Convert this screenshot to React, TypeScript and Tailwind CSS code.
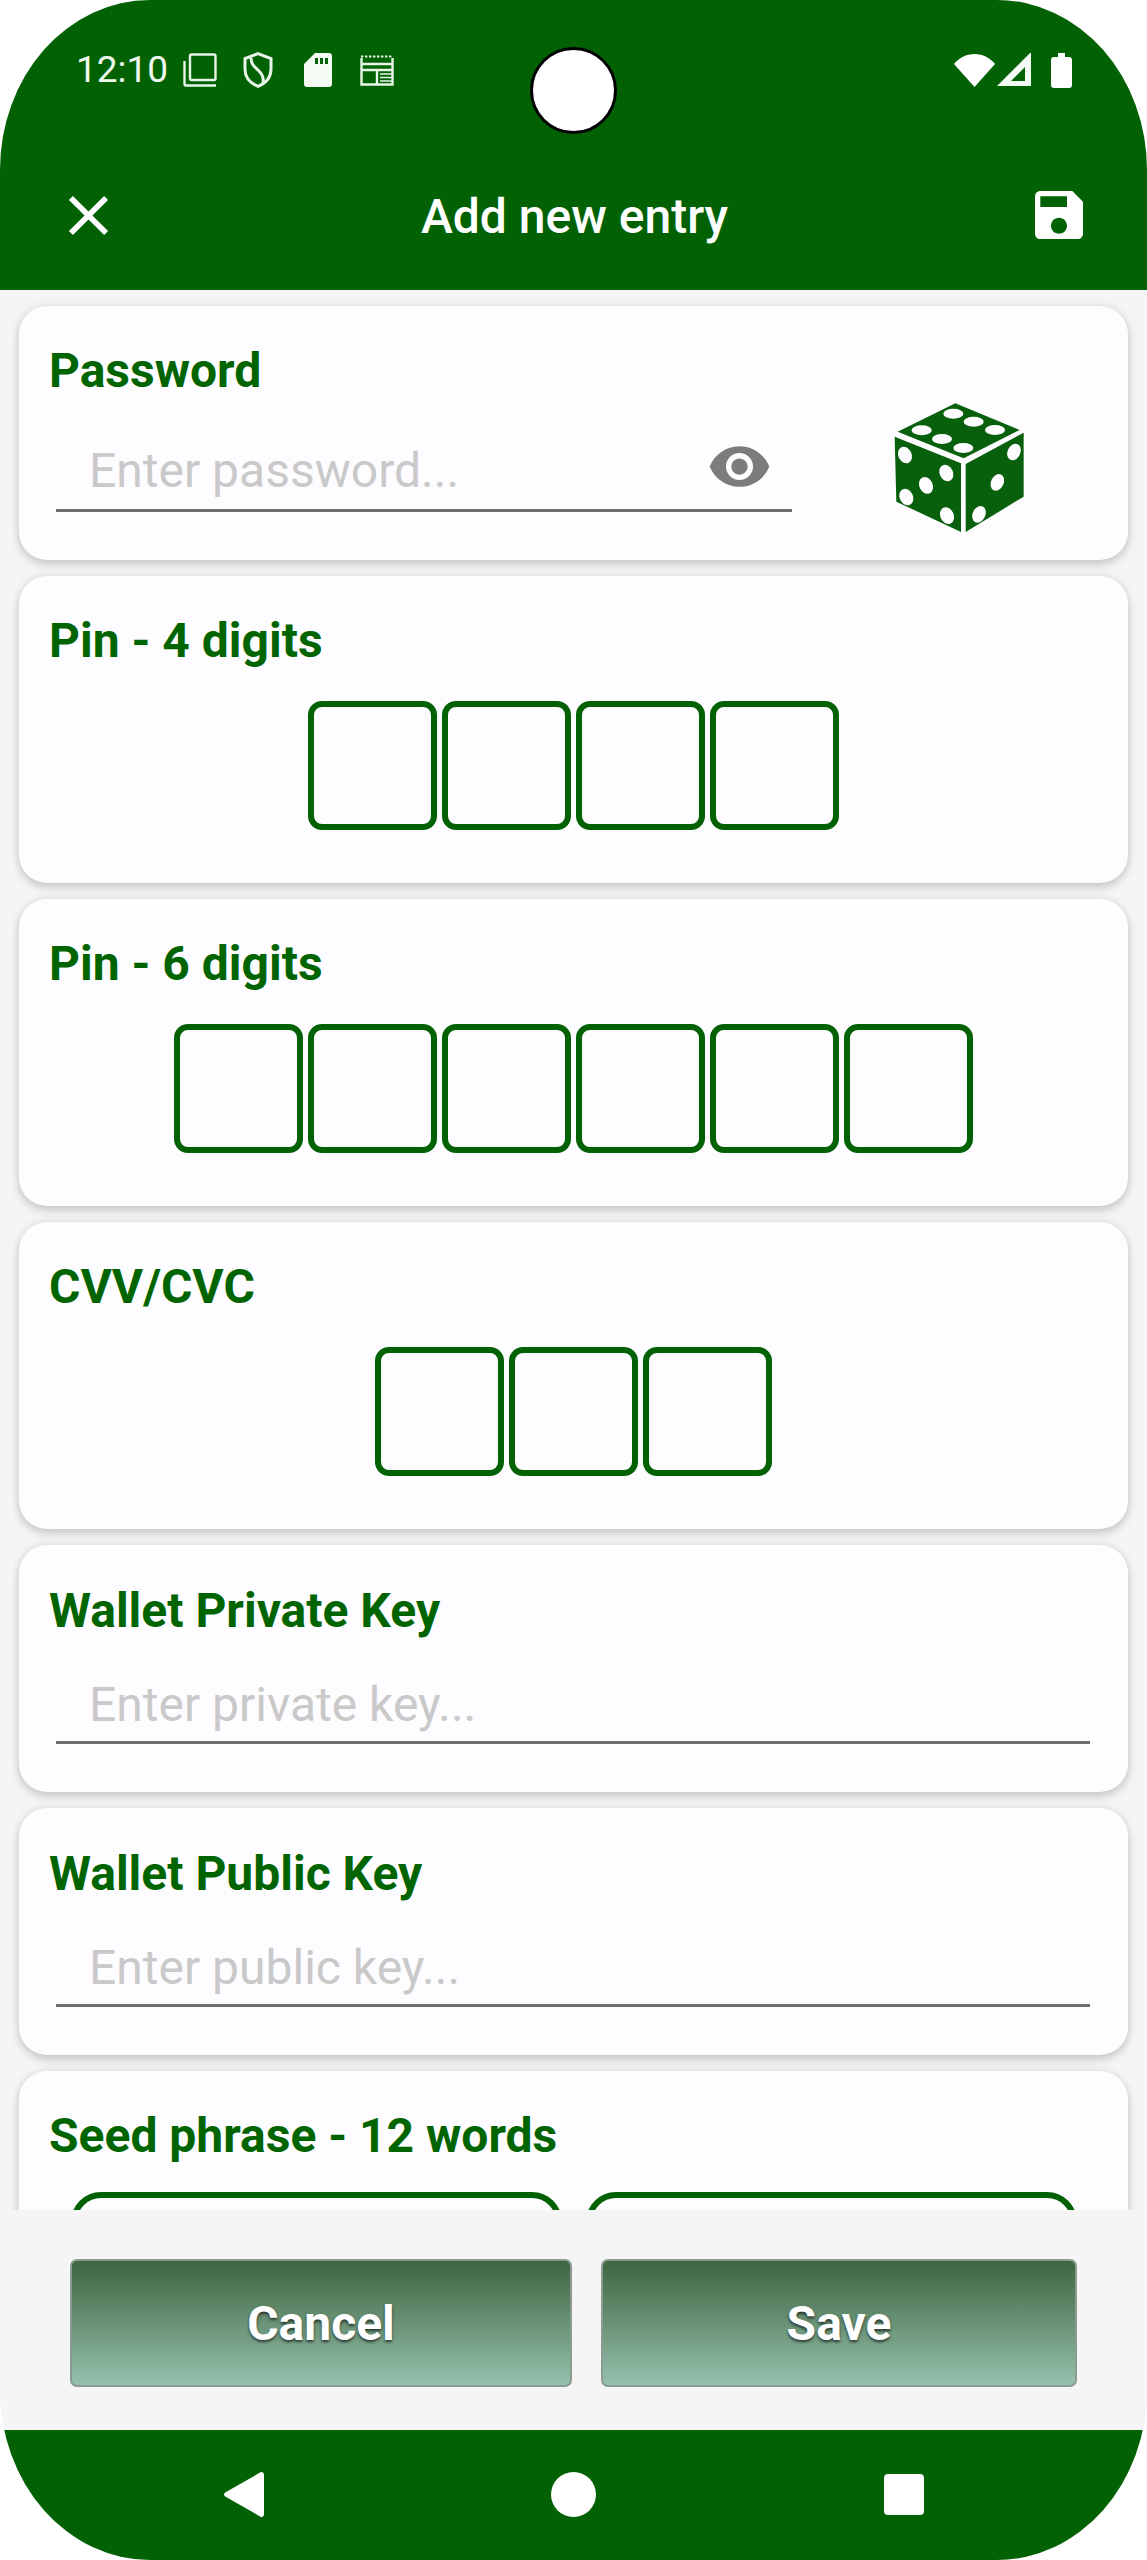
const GREEN = "#016103";

function CopyIcon() {
  return (
    <svg viewBox="0 0 34 34" className="w-[34px] h-[34px]" fill="none" stroke="#e8f5e8" strokeWidth="2.4">
      <rect x="7" y="1.5" width="25.5" height="25.5" rx="1.5" />
      <path d="M1.5 8v23a1.5 1.5 0 0 0 1.5 1.5h30" />
    </svg>
  );
}

function ShieldIcon() {
  return (
    <svg viewBox="0 0 30 36" className="w-[30px] h-[36px] ml-[26px]" fill="none" stroke="#e8f5e8" strokeWidth="3">
      <path d="M15 1.6 28 6.6v10.6c0 8-5.4 14-13 17.2C7.4 31.2 2 25.2 2 17.2V6.6z" />
      <path d="M8 6c0 7 4 9 8 13s5 7 4 12" />
    </svg>
  );
}

function SdIcon() {
  return (
    <svg viewBox="0 0 28 34" className="w-[28px] h-[34px] ml-[31px]">
      <path
        fillRule="evenodd"
        fill="#f4fbf4"
        d="M11 0h14a3 3 0 0 1 3 3v28a3 3 0 0 1-3 3H3a3 3 0 0 1-3-3V11zM11 5v6h3V5zM16 5v6h3V5zM21 5v6h3V5z"
      />
    </svg>
  );
}

function NewsIcon() {
  return (
    <svg viewBox="0 0 34 31" className="w-[34px] h-[31px] ml-[28px]" fill="none" stroke="#e8f5e8">
      <path strokeWidth="2.4" d="M1.5 3v26.5h31V3" />
      <path strokeWidth="2" strokeDasharray="2.4 1.6" d="M1 1.5h32" />
      <path strokeWidth="2.4" d="M1.5 9h31M1.5 15h31M17 15v14.5" />
      <path strokeWidth="1.6" d="M20 19h13M20 22.5h13M20 26h13" />
    </svg>
  );
}

function CloseIcon() {
  return (
    <svg viewBox="0 0 24 24" className="w-[67px] h-[67px]" fill="#ffffff">
      <path d="M19 6.41 17.59 5 12 10.59 6.41 5 5 6.41 10.59 12 5 17.59 6.41 19 12 13.41 17.59 19 19 17.59 13.41 12z" />
    </svg>
  );
}

function SaveIcon() {
  return (
    <svg viewBox="0 0 24 24" className="w-[64px] h-[64px]" fill="#ffffff">
      <path d="M17 3H5c-1.11 0-2 .9-2 2v14c0 1.1.89 2 2 2h14c1.1 0 2-.9 2-2V7l-4-4zm-5 16c-1.66 0-3-1.34-3-3s1.34-3 3-3 3 1.34 3 3-1.34 3-3 3zm3-10H5V5h10v4z" />
    </svg>
  );
}

function EyeIcon() {
  return (
    <svg viewBox="0 0 24 24" className="w-[65px] h-[65px]" fill="#7c7c7c">
      <path d="M12 4.5C7 4.5 2.73 7.61 1 12c1.73 4.39 6 7.5 11 7.5s9.27-3.11 11-7.5c-1.73-4.39-6-7.5-11-7.5zM12 17c-2.76 0-5-2.24-5-5s2.24-5 5-5 5 2.24 5 5-2.24 5-5 5zm0-8c-1.66 0-3 1.34-3 3s1.34 3 3 3 3-1.34 3-3-1.34-3-3-3z" />
    </svg>
  );
}

function Dice() {
  const pip = "#fdfcff";
  const green = "#08600c";
  return (
    <svg viewBox="0 0 538 510" className="w-[180px] h-[170px] shrink-0">
      <polygon points="285,70 478,150 310,235 112,155" fill={green} />
      <polygon points="103,170 302,250 302,456 108,365" fill={green} />
      <polygon points="316,252 490,158 490,350 316,456" fill={green} />
      <ellipse cx="279" cy="101" rx="30" ry="15" fill={pip} />
      <ellipse cx="340" cy="125" rx="30" ry="15" fill={pip} />
      <ellipse cx="404" cy="150" rx="30" ry="15" fill={pip} />
      <ellipse cx="184" cy="151" rx="30" ry="15" fill={pip} />
      <ellipse cx="245" cy="177" rx="30" ry="15" fill={pip} />
      <ellipse cx="309" cy="204" rx="30" ry="15" fill={pip} />
      <ellipse cx="134" cy="225" rx="20" ry="26" transform="rotate(-25 134 225)" fill={pip} />
      <ellipse cx="258" cy="279" rx="20" ry="26" transform="rotate(-25 258 279)" fill={pip} />
      <ellipse cx="197" cy="316" rx="20" ry="26" transform="rotate(-25 197 316)" fill={pip} />
      <ellipse cx="138" cy="351" rx="20" ry="26" transform="rotate(-25 138 351)" fill={pip} />
      <ellipse cx="260" cy="407" rx="20" ry="26" transform="rotate(-25 260 407)" fill={pip} />
      <ellipse cx="461" cy="216" rx="19" ry="26" transform="rotate(25 461 216)" fill={pip} />
      <ellipse cx="411" cy="307" rx="19" ry="26" transform="rotate(25 411 307)" fill={pip} />
      <ellipse cx="356" cy="403" rx="19" ry="26" transform="rotate(25 356 403)" fill={pip} />
    </svg>
  );
}

function Label({ children }: { children: string }) {
  return <h3 className="text-[48px] leading-[54px] font-bold text-[#006400]">{children}</h3>;
}

function Card({ className, children }: { className: string; children: React.ReactNode }) {
  return (
    <section
      className={`bg-[#fdfcff] rounded-[28px] shrink-0 shadow-[0_0_10px_rgba(0,0,0,0.1),0_5px_10px_rgba(0,0,0,0.14)] ${className}`}
    >
      {children}
    </section>
  );
}

function PinCard({ label, digits }: { label: string; digits: number }) {
  return (
    <Card className="h-[307px] pl-[30px] pt-[38px]">
      <Label>{label}</Label>
      <div className="flex justify-center gap-[5px] mt-[33px] pr-[30px]">
        {Array.from({ length: digits }).map((_, i) => (
          <div key={i} className="w-[129px] h-[129px] rounded-[14px] border-[6px] border-[#016103] bg-[#fdfcff]" />
        ))}
      </div>
    </Card>
  );
}

function KeyCard({ label, placeholder }: { label: string; placeholder: string }) {
  return (
    <Card className="h-[247px] pl-[30px] pt-[39px]">
      <Label>{label}</Label>
      <input
        placeholder={placeholder}
        readOnly
        className="block ml-[7px] mt-[25px] w-[1034px] h-[81px] pl-[33px] pt-[4px] border-b-[3px] border-[#6f6f6f] text-[48px] outline-none bg-transparent placeholder:text-[#c9c9c9]"
      />
    </Card>
  );
}

export default function App() {
  return (
    <div className="w-[1147px] h-[2560px] bg-white font-['Roboto',sans-serif]">
      <div className="relative w-full h-full flex flex-col overflow-hidden rounded-[150px/170px] bg-[#f5f5f7]">
        <header className="h-[290px] shrink-0 flex flex-col" style={{ background: GREEN }}>
          <div className="flex items-center justify-between h-[36px] mt-[52px] pl-[76px] pr-[75px]">
            <div className="flex items-center">
              <span className="text-[37px] leading-[36px] font-normal text-[#eef8ee] w-[107px]">12:10</span>
              <CopyIcon />
              <ShieldIcon />
              <SdIcon />
              <NewsIcon />
            </div>
            <div className="flex items-center">
              <svg viewBox="0 0 41 33" className="w-[41px] h-[33px]" fill="#ffffff">
                <path d="M0 10C5 4 12 0 20.5 0S36 4 41 10L20.5 33z" />
              </svg>
              <svg viewBox="0 0 34 34" className="w-[34px] h-[34px] ml-[2px]" fill="#f4fbf4">
                <path fillRule="evenodd" d="M0 33 33 0h1v33zM14 28h14V14z" />
              </svg>
              <svg viewBox="0 0 21 35" className="w-[21px] h-[35px] ml-[20px]" fill="#ffffff">
                <path d="M7 0h7v4h4a3 3 0 0 1 3 3v25a3 3 0 0 1-3 3H3a3 3 0 0 1-3-3V7a3 3 0 0 1 3-3h4z" />
              </svg>
            </div>
          </div>
          <div className="flex items-center justify-between h-[64px] mt-[95px] pl-[55px] pr-[56px]">
            <CloseIcon />
            <h1 className="text-[48px] leading-[64px] mt-[3px] font-medium text-white">Add new entry</h1>
            <SaveIcon />
          </div>
        </header>

        <main className="flex-1 min-h-0 overflow-hidden flex flex-col gap-[16px] px-[19px] pt-[16px]">
          <Card className="h-[254px] flex items-start pl-[30px] pt-[38px]">
            <div className="w-[762px]">
              <Label>Password</Label>
              <div className="relative ml-[7px] mt-[33px] w-[736px]">
                <input
                  placeholder="Enter password..."
                  readOnly
                  className="block w-full h-[81px] pl-[33px] pr-[80px] border-b-[3px] border-[#6f6f6f] text-[48px] outline-none bg-transparent placeholder:text-[#c9c9c9]"
                />
                <div className="absolute right-[20px] top-[3px]">
                  <EyeIcon />
                </div>
              </div>
            </div>
            <div className="ml-[49px] mt-[36px]">
              <Dice />
            </div>
          </Card>

          <PinCard label="Pin - 4 digits" digits={4} />
          <PinCard label="Pin - 6 digits" digits={6} />
          <PinCard label="CVV/CVC" digits={3} />
          <KeyCard label="Wallet Private Key" placeholder="Enter private key..." />
          <KeyCard label="Wallet Public Key" placeholder="Enter public key..." />

          <Card className="h-[400px] pl-[30px] pt-[38px]">
            <Label>Seed phrase - 12 words</Label>
            <div className="flex gap-[24px] ml-[22px] mt-[29px]">
              <div className="w-[491px] h-[110px] rounded-[30px] border-[6px] border-[#016103]" />
              <div className="w-[491px] h-[110px] rounded-[30px] border-[6px] border-[#016103]" />
            </div>
          </Card>
        </main>

        <div className="h-[220px] shrink-0 bg-[#f5f5f6] flex items-start gap-[29px] pl-[70px] pt-[49px]">
          <button className="w-[502px] h-[128px] pt-[2px] rounded-[7px] border-2 border-[#8b9b90] bg-gradient-to-b from-[#3f6541] to-[#96c1ae] text-white text-[48px] font-bold [text-shadow:0_2px_3px_rgba(0,0,0,0.65)]">
            Cancel
          </button>
          <button className="w-[476px] h-[128px] pt-[2px] rounded-[7px] border-2 border-[#8b9b90] bg-gradient-to-b from-[#3f6541] to-[#96c1ae] text-white text-[48px] font-bold [text-shadow:0_2px_3px_rgba(0,0,0,0.65)]">
            Save
          </button>
        </div>

        <nav className="h-[130px] shrink-0 flex justify-center pt-[42px]" style={{ background: GREEN }}>
          <div className="w-[330px] flex justify-center">
            <svg viewBox="0 0 40 45" className="w-[40px] h-[45px]" fill="#ffffff">
              <path d="M36 .6c2-1.4 4 0 4 2.4v39c0 2.4-2 3.8-4 2.4L2 25c-2.6-1.6-2.6-3.4 0-5z" />
            </svg>
          </div>
          <div className="w-[330px] flex justify-center">
            <div className="w-[45px] h-[45px] rounded-full bg-white" />
          </div>
          <div className="w-[330px] flex justify-center">
            <div className="w-[40px] h-[41px] mt-[2px] rounded-[4px] bg-white" />
          </div>
        </nav>

        <div className="absolute left-[530px] top-[47px] w-[87px] h-[87px] rounded-full bg-white border-[3px] border-black" />
      </div>
    </div>
  );
}
